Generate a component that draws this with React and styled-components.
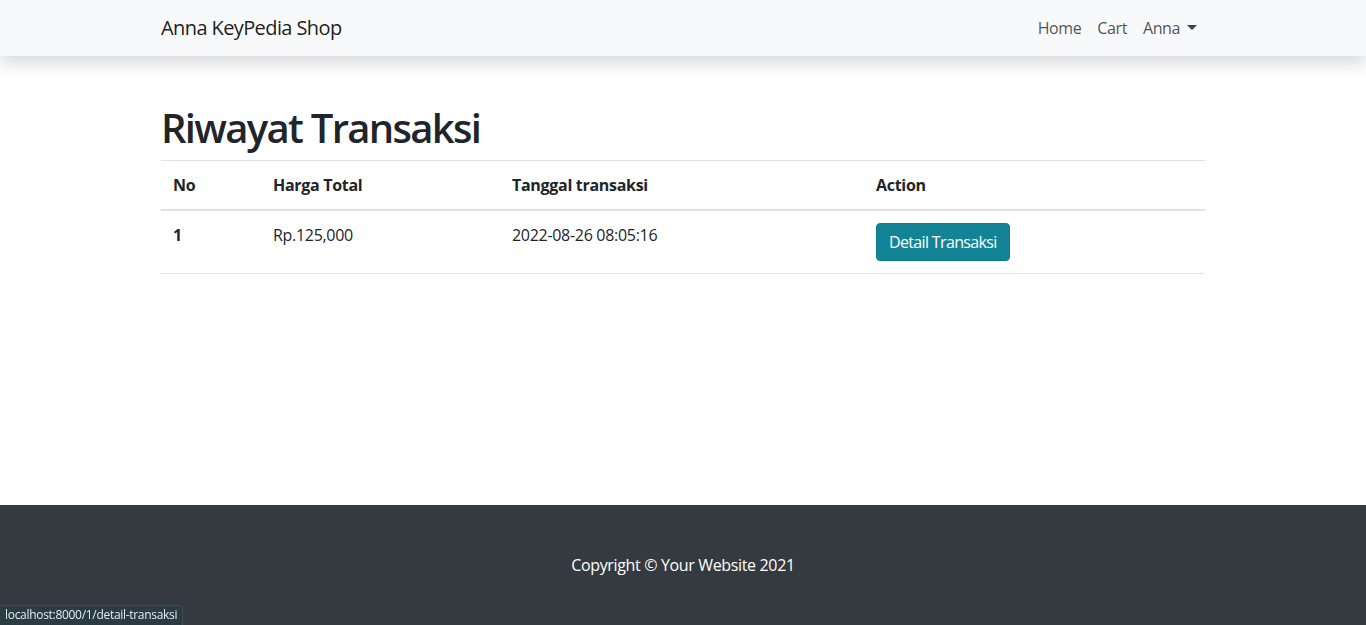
import styled, { createGlobalStyle } from 'styled-components';

const GlobalStyle = createGlobalStyle`
  * {
    box-sizing: border-box;
  }
  body {
    margin: 0;
    font-family: 'Open Sans', 'Noto Sans', sans-serif;
    font-size: 16px;
    line-height: 1.5;
    color: #212529;
    background-color: #fff;
  }
`;

const Page = styled.div`
  min-height: 100vh;
  display: flex;
  flex-direction: column;
`;

const Navbar = styled.nav`
  height: 56px;
  background-color: #f8f9fa;
  box-shadow: 0 8px 16px rgba(0, 0, 0, 0.15);
  position: relative;
  z-index: 1;
`;

const Container = styled.div`
  width: 1140px;
  margin: 0 auto;
  padding: 0 48px;
`;

const NavInner = styled(Container)`
  height: 100%;
  display: flex;
  align-items: center;
  justify-content: space-between;
`;

const Brand = styled.a`
  font-size: 20px;
  color: rgba(0, 0, 0, 0.9);
  text-decoration: none;
  letter-spacing: -0.6px;
`;

const NavList = styled.ul`
  display: flex;
  list-style: none;
  margin: 0;
  padding: 0;
`;

const NavLink = styled.a`
  display: block;
  padding: 8px;
  color: rgba(0, 0, 0, 0.7);
  text-decoration: none;
  letter-spacing: -0.4px;
`;

const Caret = styled.span`
  display: inline-block;
  margin-left: 7px;
  vertical-align: 4px;
  border-top: 5px solid rgba(0, 0, 0, 0.75);
  border-left: 5px solid transparent;
  border-right: 5px solid transparent;
`;

const Main = styled(Container)`
  padding-top: 48px;
  padding-bottom: 48px;
`;

const Title = styled.h1`
  margin: 0 0 8px;
  font-size: 40px;
  font-weight: 600;
  line-height: 1.2;
  letter-spacing: -1.7px;
`;

const Table = styled.table`
  width: 100%;
  border-collapse: collapse;
  border-bottom: 1px solid #dee2e6;
`;

const HeadCell = styled.th`
  width: ${props => props.w || 'auto'};
  padding: 12px;
  text-align: left;
  font-weight: 700;
  letter-spacing: -0.3px;
  border-top: 1px solid #dee2e6;
  border-bottom: 2px solid #dee2e6;
`;

const Cell = styled.td`
  padding: 12px;
  vertical-align: top;
  font-weight: ${props => (props.bold ? 700 : 400)};
  letter-spacing: -0.3px;
`;

const DetailButton = styled.a`
  display: inline-block;
  padding: 6px 12px;
  line-height: 24px;
  color: #fff;
  background-color: #138496;
  border: 1px solid #117a8b;
  border-radius: 4px;
  text-decoration: none;
  letter-spacing: -0.65px;
`;

const Footer = styled.footer`
  margin-top: auto;
  padding: 48px 0;
  background-color: #343a40;
  color: #fff;
  text-align: center;
`;

const FooterText = styled.p`
  margin: 0;
  letter-spacing: -0.35px;
`;

const StatusBar = styled.div`
  position: fixed;
  left: 0;
  bottom: 0;
  padding: 1px 5px 2px 5px;
  background-color: #2b3b43;
  color: #e6eaec;
  font-size: 12px;
  line-height: 16px;
  border-top-right-radius: 3px;
  border-top: 1px solid #3c4c55;
  border-right: 1px solid #3c4c55;
  letter-spacing: -0.3px;
`;

const transactions = [
  { no: 1, total: 'Rp.125,000', date: '2022-08-26 08:05:16' },
];

const App = () => {
  return (
    <Page>
      <GlobalStyle />
      <Navbar>
        <NavInner>
          <Brand href='#'>Anna KeyPedia Shop</Brand>
          <NavList>
            <li><NavLink href='#'>Home</NavLink></li>
            <li><NavLink href='#'>Cart</NavLink></li>
            <li>
              <NavLink href='#'>
                Anna<Caret />
              </NavLink>
            </li>
          </NavList>
        </NavInner>
      </Navbar>
      <Main>
        <Title>Riwayat Transaksi</Title>
        <Table>
          <thead>
            <tr>
              <HeadCell w='100px'>No</HeadCell>
              <HeadCell w='239px'>Harga Total</HeadCell>
              <HeadCell w='364px'>Tanggal transaksi</HeadCell>
              <HeadCell>Action</HeadCell>
            </tr>
          </thead>
          <tbody>
            {transactions.map(t => (
              <tr key={t.no}>
                <Cell bold>{t.no}</Cell>
                <Cell>{t.total}</Cell>
                <Cell>{t.date}</Cell>
                <Cell>
                  <DetailButton href='#'>Detail Transaksi</DetailButton>
                </Cell>
              </tr>
            ))}
          </tbody>
        </Table>
      </Main>
      <Footer>
        <FooterText>Copyright © Your Website 2021</FooterText>
      </Footer>
      <StatusBar>localhost:8000/1/detail-transaksi</StatusBar>
    </Page>
  );
};

export default App;
